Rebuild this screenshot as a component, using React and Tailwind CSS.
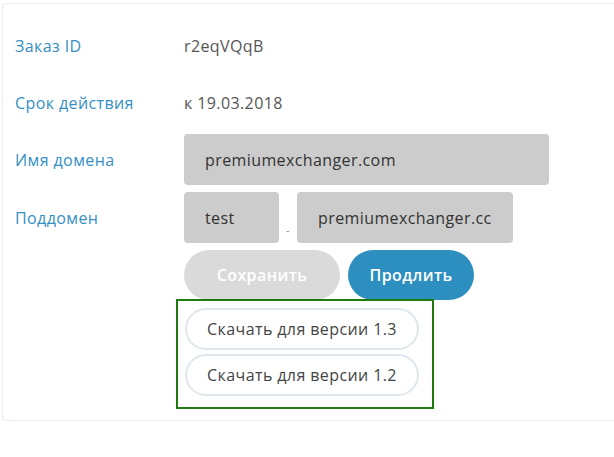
export default function App() {
  const font = { fontFamily: '"Open Sans", "Noto Sans", sans-serif' };
  return (
    <div className="w-[614px] h-[457px] overflow-hidden bg-white tracking-[0.4px]" style={font}>
      <div className="ml-[2px] mt-[3px] w-[640px] h-[418px] border border-[#e9eef2] rounded-[4px] pl-[12px] pt-[13px] flex flex-col">
        <div className="flex items-center h-[57px]">
          <div className="w-[169px] text-[16px] text-[#3590c4]">Заказ ID</div>
          <div className="text-[16px] text-[#555]">r2eqVQqB</div>
        </div>
        <div className="flex items-center h-[57px]">
          <div className="w-[169px] text-[16px] text-[#3590c4]">Срок действия</div>
          <div className="text-[16px] text-[#555]">к 19.03.2018</div>
        </div>
        <div className="flex items-center h-[51px] mt-[3px]">
          <div className="w-[169px] text-[16px] text-[#3590c4]">Имя домена</div>
          <div className="w-[365px] h-[51px] bg-[#cccccc] rounded-[4px] flex items-center pl-[21px] text-[16px] text-[#333]">premiumexchanger.com</div>
        </div>
        <div className="flex items-center h-[51px] mt-[7px]">
          <div className="w-[169px] text-[16px] text-[#3590c4]">Поддомен</div>
          <div className="w-[95px] h-[51px] bg-[#cccccc] rounded-[4px] flex items-center pl-[21px] text-[16px] text-[#333]">test</div>
          <div className="w-[18px] h-[51px] flex items-end justify-center pb-[8px] text-[10px] text-[#888] leading-none">-</div>
          <div className="w-[216px] h-[51px] bg-[#cccccc] rounded-[4px] flex items-center pl-[21px] text-[16px] text-[#333]">premiumexchanger.cc</div>
        </div>
        <div className="flex h-[50px] mt-[7px] pl-[169px] gap-[8px]">
          <div className="w-[156px] h-[50px] rounded-full bg-[#dadada] text-white text-[16px] font-semibold flex items-center justify-center">Сохранить</div>
          <div className="w-[126px] h-[50px] rounded-full bg-[#2d8fc0] text-white text-[16px] font-semibold flex items-center justify-center">Продлить</div>
        </div>
        <div className="ml-[161px] mt-[-1px] w-[258px] h-[110px] border-2 border-[#1f7a12] pl-[7px] pt-[7px] flex flex-col gap-[4px]">
          <div className="w-[234px] h-[42px] rounded-full border-2 border-[#dfe7ee] flex items-center justify-center text-[16px] text-[#444]">Скачать для версии 1.3</div>
          <div className="w-[234px] h-[42px] rounded-full border-2 border-[#dfe7ee] flex items-center justify-center text-[16px] text-[#444]">Скачать для версии 1.2</div>
        </div>
      </div>
    </div>
  );
}
